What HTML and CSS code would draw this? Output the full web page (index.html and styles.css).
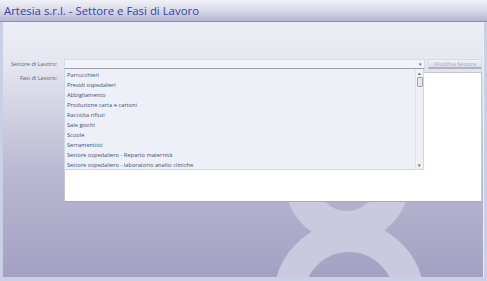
FILE: index.html
```html
<!DOCTYPE html>
<html lang="it">
<head>
    <meta charset="UTF-8">
    <title>Artesia s.r.l. - Settore e Fasi di Lavoro</title>
    <link rel="stylesheet" href="styles.css">
</head>
<body>
    <div class="window">
        <div class="titlebar">Artesia s.r.l. - Settore e Fasi di Lavoro</div>
        <div class="client">
            <!-- watermark -->
            <svg class="watermark" width="487" height="260" viewBox="0 21 487 260">
                <circle cx="347" cy="180" r="46" fill="none" stroke="#cbc9df" stroke-width="32"/>
                <circle cx="349" cy="296" r="60" fill="none" stroke="#cbc9df" stroke-width="30"/>
            </svg>

            <div class="form">
                <div class="row">
                    <label class="lbl">Settore di Lavoro:</label>
                    <div class="combo">
                        <span class="combo-arrow">&#9662;</span>
                    </div>
                    <button class="btn" disabled>Modifica Settore</button>
                </div>
                <div class="row">
                    <label class="lbl lbl-top">Fasi di Lavoro:</label>
                    <div class="fasi-panel"></div>
                </div>

                <!-- open dropdown -->
                <div class="dropdown">
                    <ul class="items">
                        <li>Parrucchieri</li>
                        <li>Presidi ospedalieri</li>
                        <li>Abbigliamento</li>
                        <li>Produzione carta e cartoni</li>
                        <li>Raccolta rifiuti</li>
                        <li>Sale giochi</li>
                        <li>Scuole</li>
                        <li>Serramentisti</li>
                        <li>Settore ospedaliero - Reparto maternità</li>
                        <li>Settore ospedaliero - laboratorio analisi cliniche</li>
                    </ul>
                    <div class="scrollbar">
                        <span class="sb-arrow">&#9652;</span>
                        <span class="sb-thumb"></span>
                        <span class="sb-space"></span>
                        <span class="sb-arrow">&#9662;</span>
                    </div>
                </div>
            </div>
        </div>
    </div>
</body>
</html>
```

FILE: styles.css
```css
* {
    box-sizing: border-box;
}

body {
    margin: 0;
    font-family: "Open Sans", "Noto Sans", sans-serif;
}

.window {
    width: 487px;
    height: 281px;
    display: flex;
    flex-direction: column;
    background: #c9d0e6;
}

.titlebar {
    height: 22px;
    padding: 1px 0 0 4px;
    font-size: 11.4px;
    line-height: 20px;
    color: #33449a;
    background: linear-gradient(#f1f1f8, #dcdcec 45%, #b7b6d4);
    border-bottom: 1px solid #8f8db4;
    white-space: nowrap;
}

.client {
    flex: 1;
    position: relative;
    margin: 0 3px 4px 3px;
    background: linear-gradient(#eceef5, #e6e8f1 15%, #b9b7d1 60%, #a4a0c3);
    border-right: 1px solid #eef0f8;
    overflow: hidden;
}

.watermark {
    position: absolute;
    left: -3px;
    top: 0;
}

.form {
    position: relative;
    padding: 37px 0 0 0;
}

.row {
    display: flex;
    align-items: flex-start;
    gap: 3px;
    margin-bottom: 3px;
}

.lbl {
    width: 54px;
    margin-right: 4px;
    font-size: 5.6px;
    line-height: 10px;
    color: #5d6070;
    text-align: right;
    white-space: nowrap;
}

.lbl-top {
    margin-top: 1px;
}

.combo {
    width: 361px;
    height: 10px;
    position: relative;
    background: #f1f3f8;
    border: 1px solid #d8dce6;
    border-bottom-color: #9aa0b0;
}

.combo-arrow {
    position: absolute;
    right: 2px;
    top: 0;
    font-size: 5px;
    line-height: 8px;
    color: #606878;
}

.btn {
    width: 54px;
    height: 10px;
    padding: 0;
    font-family: inherit;
    font-size: 5.5px;
    color: #a8acbc;
    background: linear-gradient(#f2f3f8, #dcdde8);
    border: 1px solid #d6d8e4;
    border-bottom: 2px solid #b0b2c4;
}

.fasi-panel {
    width: 418px;
    height: 130px;
    background: #fff;
    border: 1px solid #c6c8d6;
    border-bottom-color: #a6a8b8;
}

.dropdown {
    position: absolute;
    left: 61px;
    top: 47px;
    width: 360px;
    height: 101px;
    display: flex;
    background: #edf1f7;
    border: 1px solid #cfd6e4;
    border-top: none;
}

.items {
    flex: 1;
    list-style: none;
    margin: 0;
    padding: 1px 0 0 2px;
}

.items li {
    height: 10px;
    font-size: 5.7px;
    line-height: 10px;
    color: #3b4e7c;
    white-space: nowrap;
}

.scrollbar {
    width: 8px;
    display: flex;
    flex-direction: column;
    align-items: center;
    background: #f0f0f4;
    border-left: 1px solid #e0e2ea;
}

.sb-arrow {
    height: 8px;
    font-size: 5px;
    line-height: 8px;
    color: #505868;
}

.sb-thumb {
    width: 6px;
    height: 10px;
    background: #e4e6ec;
    border: 1px solid #9ea4b4;
    border-radius: 1px;
}

.sb-space {
    flex: 1;
}
```
